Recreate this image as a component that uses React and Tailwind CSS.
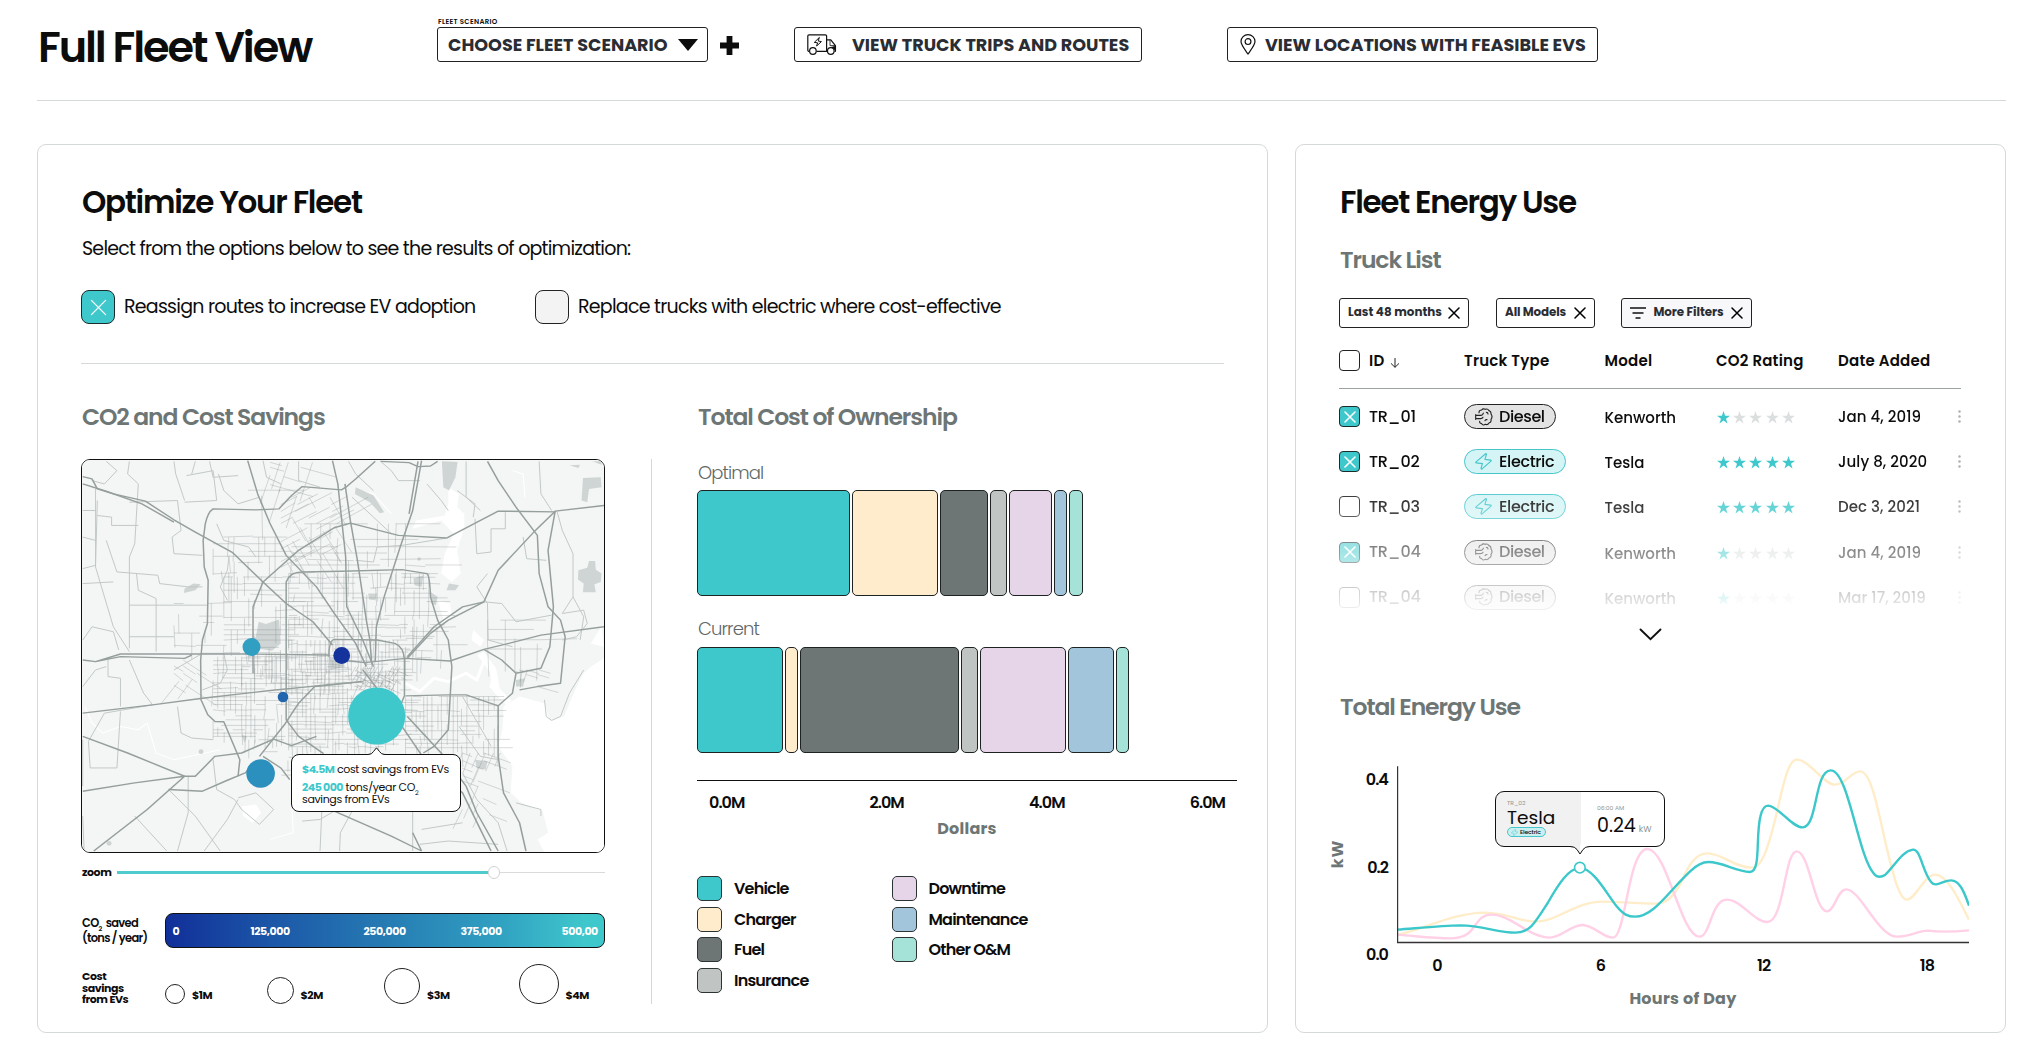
import React from 'react';

function seeded(seed) {
  let s = seed;
  return () => {
    s = (s * 16807) % 2147483647;
    return s / 2147483647;
  };
}

/* Street grid: broken horizontal and vertical segments inside a box. */
function streets(seed, x0, y0, x1, y1, step, keep, skew = 0) {
  const rnd = seeded(seed);
  let d = '';
  for (let y = y0; y < y1; y += step * (0.7 + rnd() * 0.6)) {
    for (let x = x0; x < x1; ) {
      const len = step * (1.5 + rnd() * 4);
      if (rnd() < keep) d += `M${x.toFixed(0)} ${y.toFixed(0)}l${len.toFixed(0)} ${(skew * len + (rnd() < 0.25 ? rnd() * 10 - 5 : 0)).toFixed(0)}`;
      x += len;
    }
  }
  for (let x = x0; x < x1; x += step * (0.7 + rnd() * 0.6)) {
    for (let y = y0; y < y1; ) {
      const len = step * (1.5 + rnd() * 4);
      if (rnd() < keep) d += `M${x.toFixed(0)} ${y.toFixed(0)}l${(-skew * len + (rnd() < 0.25 ? rnd() * 10 - 5 : 0)).toFixed(0)} ${len.toFixed(0)}`;
      y += len;
    }
  }
  return d;
}

const GRID = [
  streets(11, 430, 410, 600, 640, 17, 0.62),
  streets(23, 612, 400, 1010, 600, 14, 0.62),
  streets(37, 400, 650, 600, 900, 14, 0.62),
  streets(41, 612, 600, 930, 930, 12, 0.66),
  streets(53, 940, 770, 1200, 930, 14, 0.62),
  streets(67, 940, 560, 1060, 660, 18, 0.45),
  streets(71, 290, 490, 400, 640, 18, 0.4),
  streets(83, 400, 290, 600, 410, 19, 0.5),
  streets(97, 590, 170, 760, 390, 20, 0.55, -0.55),
  streets(101, 480, 640, 760, 740, 12, 0.5),
  streets(113, 800, 680, 930, 750, 9, 0.6, 0.5),
  streets(127, 1170, 540, 1330, 640, 24, 0.5),
  streets(131, 1100, 940, 1210, 1130, 18, 0.45, 0.4),
  streets(137, 560, 65, 720, 170, 22, 0.4, 0.3),
  streets(139, 1240, 690, 1320, 745, 12, 0.5, 0.3),
  streets(149, 290, 660, 370, 750, 17, 0.45, 0.7),
  streets(151, 620, 250, 1000, 400, 24, 0.4),
  streets(157, 500, 900, 620, 1010, 18, 0.35),
  streets(163, 380, 70, 560, 200, 36, 0.35),
];

const RURAL = [
  'M70 145V380L120 560L165 635', 'M165 62L160 100L190 130L180 310L165 350L165 625', 'M34 210H70M34 290L70 300', 'M34 385L70 375L75 180',
  'M100 62L130 90L95 130L60 120', 'M75 225L115 230L115 255L190 255', 'M165 185L300 180L310 270L285 290L290 340L370 345', 'M290 62L295 100L320 180',
  'M325 105L400 90L410 180L320 185', 'M340 100L350 62M390 62L400 110L470 105', 'M100 300L130 395L245 405L250 430L330 440L370 440', 'M165 495H385M240 475V635M165 590H290',
  'M185 400L190 450L240 475', 'M34 430L120 425', 'M165 660L205 760L230 795', 'M105 660V710L140 715L140 800', 'M50 905L95 820L230 795', 'M140 815L130 985L55 985L50 905',
  'M300 800L310 880L340 895L400 900', 'M290 690L370 640L430 640L440 690L420 730L370 750', 'M180 1130L270 1235M275 1050L350 1130L420 1235', 'M330 1010L330 1120L300 1235', 'M375 1235L440 1140L470 1080',
  'M34 600L60 560L120 575L135 630', 'M34 740L70 690L100 680', 'M34 1130L38 1235', 'M34 1040L34 900', 'M1110 62L1110 170L1150 210', 'M1135 235L1140 340L1180 335L1180 265L1220 265L1220 215',
  'M1315 62L1320 160L1350 210M1365 212L1380 270L1410 340L1410 470L1380 520', 'M1270 290L1280 355L1335 360M1170 490L1140 440L1170 400', 'M1160 485L1210 490L1250 545L1350 525M1170 490L1172 600L1240 620',
  'M1380 520L1440 510L1450 550L1420 590L1380 600', 'M700 1235L705 1115M755 1235L757 1180L790 1115M960 1235L960 1115L980 1060', 'M980 1215L1060 1205L1200 1215M985 1170L1100 1150', 'M650 1145L700 1140L740 1115',
  'M400 960L410 1050L460 1080L480 1110L530 1155L570 1110L520 1060L470 1075', 'M870 62L900 90L920 120L980 120M1000 130L1040 180L1060 210', 'M780 62L800 100L850 150M790 170L850 230L900 280',
  'M860 320L850 365L800 360M860 320L930 315L1055 293', 'M1085 150L1135 190L1130 230', 'M415 100L430 150L470 190L530 170', 'M410 250L430 300L500 320L520 350', 'M440 480L420 440L440 390L445 345',
  'M1090 860L1150 950L1200 960M1100 1000L1140 1080L1200 1150L1225 1235', 'M1330 780L1335 830L1350 842L1375 830L1400 760L1440 690', 'M1250 1090L1320 1110L1320 1130', 'M540 60L550 110L590 130M640 62L640 120L700 140', 'M1180 920L1100 770M1410 470L1440 530L1430 600',
];

const MAJOR = [
  'M34 108L60 115L75 145L120 160L210 182L290 238L350 275L455 337L540 425L605 490L680 545L735 615',
  'M34 130L100 152L200 190L290 245',
  'M855 62L800 115L775 138L760 148L650 138L620 165L585 205L520 208L400 205Q385 215 378 250L372 300L375 380L386 420L384 550L370 600L365 660L366 780L385 825L405 845L430 846L475 960L470 1010',
  'M605 495V425Q615 395 650 395L760 393L930 388L1000 400Q1008 405 1010 470L1030 540L1060 600L1070 680L1060 870L1020 920L990 940M605 490V840L640 890L710 942',
  'M34 660L70 665L140 642L330 642L480 642L725 645M70 665L140 650L320 655L340 645M760 660L825 668L940 655L1065 663L1160 628L1230 610L1320 585L1497 560',
  'M735 60L750 130L762 250L772 350L775 500L820 600L850 680', 'M770 130L785 240L805 360L830 540L840 600L845 670',
  'M497 60L525 160L560 250L605 345L690 440L740 520L800 610L830 680', 'M985 60L960 210L925 320L880 470L858 560L855 665M975 62L950 220',
  'M1170 62L1200 120L1250 200L1310 285L1315 400L1340 500L1375 540L1388 590L1375 730L1310 740L1260 750', 'M1497 195L1360 212L1300 275L1200 390L1160 485L1060 540L1010 580L945 655',
  'M1160 485L1100 500L1020 560L945 650', 'M1360 212L1340 330L1355 500L1345 620L1320 685L1250 700L1240 760L1200 798L1110 765L1060 765L940 768', 'M1160 628L1210 660L1250 700',
  'M34 820L230 795L370 775L560 752L720 735L815 725', 'M34 890L160 940L320 1010L350 1010L405 950L480 940L570 898L620 918L690 890',
  'M530 950L600 855L640 790L685 740L820 725M520 965L490 1000L440 1022L370 1055L275 1050', 'M34 1055L180 1030L320 1010L215 1110L65 1235', 'M820 690L870 760L930 860L1000 970L1100 1060L1150 1170L1180 1235',
  'M945 830L1040 940L1110 1040L1140 1120L1200 1235', 'M740 1115L900 1190L985 1235M960 1180L985 1235', 'M725 650Q725 600 740 598L860 600L910 610Q935 620 937 660L937 768L905 850',
  'M1200 798V950L1215 1060L1260 1150L1278 1235', 'M1055 293L920 285L785 248L740 262L640 330L540 425L512 500L512 700', 'M1055 293L1200 212L1360 214', 'M540 950L590 985L615 1020', 'M870 62L950 66L975 78L1010 76L1030 62',
];

function CityMap() {
  return (
    <svg className="block h-full w-full" viewBox="32 58 1465 1180" preserveAspectRatio="none">
      <rect x="32" y="58" width="1465" height="1180" fill="#f4f5f5" />
      <g fill="#ffffff">
        <path d="M1497 655L1460 680L1440 700L1420 740L1385 830L1345 842L1330 790L1260 770L1215 800L1212 870L1200 920L1240 980L1235 1060L1265 1090L1325 1115L1340 1180L1310 1200L1330 1238H1497Z" />
        <path d="M1060 140L1090 160L1085 200L1105 220L1105 260L1085 330L1095 400L1070 425L1040 400L1050 340L1075 280L1040 240L960 265L970 240L1050 225L1060 190Z" />
        <path d="M1030 480L1065 490L1070 530L1050 550ZM1130 570L1160 600L1150 620L1125 600ZM480 1100L520 1095L535 1120L510 1150L485 1130ZM1490 560L1497 620L1460 610Z" />
      </g>
      <g fill="none" stroke="#ffffff" strokeLinejoin="round">
        <path strokeWidth="9" d="M940 730L980 755L1020 715L1060 725L1110 700L1140 720L1165 650L1190 690L1180 740L1215 770" />
        <path strokeWidth="20" d="M1150 640L1185 690L1195 750L1230 790" />
        <path strokeWidth="3" d="M40 800L60 850L90 880L140 860L190 870L215 850L240 940L290 960L420 930M620 1080L625 1180L560 1200M1240 90L1270 100L1275 170M900 220L850 160L800 150" />
      </g>
      <g fill="#cfd5d4">
        <path d="M528 545L548 552L585 538L590 610L565 632L520 625L500 610L520 590Z" />
        <path d="M1425 390L1450 382L1455 362L1472 362L1474 388L1490 400L1488 425L1470 432L1474 456L1438 456L1440 430L1424 418Z" />
        <path d="M1042 62L1086 64L1080 110L1062 150L1046 140Z" />
        <path d="M1438 112L1488 110L1490 140L1455 145L1450 185L1434 180ZM1464 62H1490V72ZM1400 74L1430 72L1425 82Z" />
        <path d="M962 415L990 405L985 440L965 435ZM1062 430L1090 435L1080 450L1055 450ZM1010 455L1030 470L1025 495L1012 490Z" />
        <path d="M320 445L345 430L365 432L350 450L318 458ZM725 650L760 655L770 680L730 690ZM835 460L860 460L855 480L838 478ZM480 885L495 890L488 910ZM1135 960L1170 965L1165 990L1140 985ZM1250 720L1275 715L1270 740L1250 740ZM800 140L850 165L880 215L868 218L840 185L798 160Z" />
        <circle cx="108" cy="1212" r="7" /><circle cx="366" cy="936" r="7" /><circle cx="978" cy="356" r="5" />
      </g>
      <g fill="none" stroke="#75817f" strokeOpacity="0.4" strokeWidth="2" strokeLinejoin="round">
        {GRID.map((d, i) => <path key={i} d={d} />)}
      </g>
      <g fill="none" stroke="#c0c7c5" strokeWidth="2.8" strokeLinejoin="round">
        {RURAL.map((d, i) => <path key={i} d={d} />)}
      </g>
      <g fill="none" stroke="#959f9d" strokeWidth="4.2" strokeLinejoin="round">
        {MAJOR.map((d, i) => <path key={i} d={d} />)}
      </g>
    </svg>
  );
}

const Cross = ({ className, w = 2 }) => (
  <svg className={className} viewBox="0 0 12 12" fill="none" stroke="currentColor" strokeWidth={w} strokeLinecap="round">
    <path d="M1 1L11 11M11 1L1 11" />
  </svg>
);

const TruckIcon = () => (
  <svg className="h-[21px] w-[30px]" viewBox="0 0 30 21" fill="none" stroke="#111" strokeWidth="1.2" strokeLinejoin="round">
    <path d="M2.2 17.3H1.8Q.8 17.3 .8 16V2Q.8 .8 2 .8H18.4Q19.6 .8 19.6 2V17.3H9.5M19.6 5.8H23.8L28.4 11.6V17.3H27.6M19.6 17.3H20" />
    <path d="M23 6.2V11.6H28.4" strokeWidth=".8" />
    <path d="M24 13.4L28.6 12V16.6L27 15Z" fill="#111" strokeWidth=".6" />
    <path d="M12.4 3.4L7.3 8.4L10.6 8.8L9.6 12L14.4 7.6L11.2 7Z" strokeWidth="1" />
    <circle cx="5.9" cy="17" r="3.3" fill="#fff" /><circle cx="23.8" cy="17" r="3.3" fill="#fff" />
  </svg>
);

const PinIcon = () => (
  <svg className="h-[21px] w-[16px]" viewBox="0 0 16 21" fill="none" stroke="#111" strokeWidth="1.2">
    <path d="M8 20C4.6 15.2 1 11 1 7.6A7 7 0 0 1 15 7.6C15 11 11.4 15.2 8 20Z" />
    <circle cx="8" cy="7.6" r="2.9" />
  </svg>
);

const ExhaustIcon = () => (
  <svg className="h-[18px] w-[18px] shrink-0" viewBox="0 0 54 54" fill="none" stroke="#222" strokeWidth="3.4" strokeLinecap="round" strokeLinejoin="round">
    <path d="M2 20V34M2 22H17Q24 22 25 15M2 32H17Q22 32 24 28" />
    <path d="M12 14Q12 6 20 6Q24 0 31 4Q38 1 42 8Q49 10 48 18Q54 26 48 34Q50 43 42 45Q38 52 31 49Q24 54 20 47Q13 46 14 40" />
    <path d="M34 13Q39 13 39 18M30 38Q31 34 36 35" />
  </svg>
);

const BoltIcon = ({ className }) => (
  <svg className={className} viewBox="0 0 48 48" fill="none" stroke="#45c6ca" strokeWidth="3.2" strokeLinejoin="round">
    <path d="M30 2Q33 1 32 5L28 18L44 20Q47 21 45 23L20 45Q17 47 17 43L21 30L4 28Q1 27 3 25Z" />
  </svg>
);

const Check = ({ on }) =>
  on ? (
    <span className="flex h-[21px] w-[21px] items-center justify-center rounded-[4px] border border-[#1c2b2c] bg-[#3ec8cb] text-white">
      <Cross className="h-[12px] w-[12px]" w={1.6} />
    </span>
  ) : (
    <span className="h-[21px] w-[21px] rounded-[4px] border border-[#222] bg-white" />
  );

const TypePill = ({ type }) =>
  type === 'Diesel' ? (
    <span className="flex h-[25px] w-[92px] items-center gap-[6px] rounded-full border border-[#222] bg-[#e3e3e3] pl-[10px] tracking-[-0.025em]">
      <ExhaustIcon />Diesel
    </span>
  ) : (
    <span className="flex h-[25px] w-[102px] items-center gap-[7px] rounded-full border border-[#45c6ca] bg-[#d5f4f5] pl-[10px] tracking-[-0.022em]">
      <BoltIcon className="h-[17px] w-[17px] shrink-0" />Electric
    </span>
  );

const Stars = ({ n }) => (
  <span className="flex gap-[3.2px] pl-px pt-[2px]">
    {[0, 1, 2, 3, 4].map((i) => (
      <svg key={i} className={i < n ? 'h-[13px] w-[13px] text-[#3ec8cb]' : 'h-[13px] w-[13px] text-[#dcdfdf]'} viewBox="0 0 24 24" fill="currentColor">
        <path d="M12 0L14.9 8.7H24L16.6 14.1L19.4 23L12 17.6L4.6 23L7.4 14.1L0 8.7H9.1Z" />
      </svg>
    ))}
  </span>
);

const ROWS = [
  { on: true, id: 'TR_01', type: 'Diesel', model: 'Kenworth', stars: 1, date: 'Jan 4, 2019' },
  { on: true, id: 'TR_02', type: 'Electric', model: 'Tesla', stars: 5, date: 'July 8, 2020' },
  { on: false, id: 'TR_03', type: 'Electric', model: 'Tesla', stars: 5, date: 'Dec 3, 2021' },
  { on: true, id: 'TR_04', type: 'Diesel', model: 'Kenworth', stars: 1, date: 'Jan 4, 2019' },
  { on: false, id: 'TR_04', type: 'Diesel', model: 'Kenworth', stars: 1, date: 'Mar 17, 2019' },
];

const COLORS = ['bg-[#3ec8cb]', 'bg-[#ffeccd]', 'bg-[#6d7675]', 'bg-[#c0c5c4]', 'bg-[#e6d5e8]', 'bg-[#a3c5dc]', 'bg-[#a5e2d8]'];
const OPTIMAL = [153.5, 86, 48, 17, 42.5, 13, 14];
const CURRENT = [86.5, 13, 158.5, 17, 86, 46, 13.5];

const CostBar = ({ parts }) => (
  <div className="-ml-[0.5px] flex h-[106px] gap-[2px]">
    {parts.map((w, i) => (
      <div key={i} className={`${COLORS[i]} rounded-[5px] border border-[#1d2323]`} style={{ width: w }} />
    ))}
  </div>
);

const LegendItem = ({ i, children }) => (
  <div className="flex h-[25px] items-center gap-[12px]">
    <span className={`${COLORS[i]} h-[25px] w-[25px] rounded-[5px] border border-[#2c3333]`} />
    <span className="pt-px text-[16px] font-semibold leading-[20px] tracking-[-0.05em]">{children}</span>
  </div>
);

const Chip = ({ className, children }) => (
  <span className={`${className} flex h-[30px] items-center justify-between rounded-[3px] border border-[#222] pl-[8px] pr-[8px] text-[11.9px] font-bold leading-none text-[#2a2d33]`}>
    {children}
    <Cross className="h-[12px] w-[12px] text-black" w={1.5} />
  </span>
);

const SizeKey = ({ circle, label }) => (
  <div className="flex items-end gap-[7px]">
    <span className={`${circle} rounded-full border border-[#222]`} />
    <span className="h-[17px] leading-[16px]">{label}</span>
  </div>
);

const H2 = ({ children }) => <h2 className="h-[40px] pl-px text-[31px] font-semibold leading-[40px] tracking-[-0.041em]">{children}</h2>;
const H3 = ({ children }) => <h3 className="h-[34px] pl-px text-[23.5px] font-semibold leading-[34px] tracking-[-0.046em] text-[#6d7675]">{children}</h3>;

function Header() {
  return (
    <header className="mx-[37px] flex h-[101px] w-[1969px] items-start border-b border-[#d5d8d8]">
      <h1 className="mt-[17px] w-[400px] pl-px text-[43px] font-semibold leading-[60px] tracking-[-0.05em]">Full Fleet View</h1>
      <div className="mt-[17px] w-[357px]">
        <div className="h-[10px] pl-px text-[7px] font-semibold leading-[10px] tracking-[0.04em]">FLEET SCENARIO</div>
        <div className="flex items-center">
          <div className="flex h-[35px] w-[271px] items-center justify-between rounded-[3px] border border-[#222] pl-[10px] pr-[9px] text-[17.6px] font-bold text-[#2a2d33]">
            <span className="pt-[3px] leading-none">CHOOSE FLEET SCENARIO</span>
            <svg className="h-[12px] w-[20px]" viewBox="0 0 20 12"><path d="M0 0H20L10 12Z" fill="#0c0c0c" /></svg>
          </div>
          <svg className="ml-[12px] mt-[2px] h-[19px] w-[19px]" viewBox="0 0 19 19"><path d="M6.6 0H12.4V6.6H19V12.4H12.4V19H6.6V12.4H0V6.6H6.6Z" fill="#0c0c0c" /></svg>
        </div>
      </div>
      <div className="mt-[27px] flex h-[35px] w-[348px] items-center rounded-[3px] border border-[#222] pl-[12px] text-[17.6px] font-bold text-[#2a2d33]">
        <TruckIcon />
        <span className="ml-[15px] whitespace-nowrap pt-[3px] leading-none">VIEW TRUCK TRIPS AND ROUTES</span>
      </div>
      <div className="ml-[85px] mt-[27px] flex h-[35px] w-[371px] items-center rounded-[3px] border border-[#222] pl-[12px] text-[17.6px] font-bold text-[#2a2d33]">
        <PinIcon />
        <span className="ml-[9px] whitespace-nowrap pt-[3px] leading-none">VIEW LOCATIONS WITH FEASIBLE EVS</span>
      </div>
    </header>
  );
}

function SavingsColumn() {
  return (
    <section className="w-[524px]">
      <H3>CO2 and Cost Savings</H3>
      <div className="relative mt-[25px] h-[394px] w-[524px] overflow-hidden rounded-[9px] border-[1.5px] border-[#111]">
        <CityMap />
        <svg className="absolute left-0 top-0 h-full w-full" viewBox="0 0 522 392">
          <circle cx="169.5" cy="187" r="9" fill="#319fc2" />
          <circle cx="259.7" cy="195.5" r="8.4" fill="#14339c" />
          <circle cx="201" cy="237" r="5.3" fill="#2165ae" />
          <circle cx="294.7" cy="256" r="28.6" fill="#3fc8cc" />
          <circle cx="178.6" cy="313.5" r="14.3" fill="#2b90bd" />
        </svg>
        <div className="absolute left-[209px] top-[294px] h-[58px] w-[170px] rounded-[8px] border border-[#111] bg-white pl-[10px] pt-[8px] text-[11px] leading-[12px] tracking-[-0.032em]">
          <svg className="absolute left-[76px] top-[-8px] h-[9px] w-[17px]" viewBox="0 0 17 9"><path d="M0 7.5Q4 7.5 5.5 4.5L8.5 .8L11.5 4.5Q13 7.5 17 7.5V9H0Z" fill="#fff" /><path d="M0 7.5Q4 7.5 5.5 4.5L8.5 .8L11.5 4.5Q13 7.5 17 7.5" fill="none" stroke="#111" /></svg>
          <p className="whitespace-nowrap"><b className="font-bold tracking-[-0.05em] text-[#3ec8cb]">$4.5M</b> cost savings from EVs</p>
          <p className="mt-[6px] whitespace-nowrap"><b className="font-bold tracking-[-0.05em] text-[#3ec8cb]">245 000</b> tons/year CO<span className="relative top-[4px] text-[6.5px] leading-none">2</span></p>
          <p className="whitespace-nowrap">savings from EVs</p>
        </div>
      </div>
      <div className="mt-[9px] flex h-[20px] items-center text-[11px] font-bold leading-none tracking-[-0.04em]">
        <span className="w-[36px] pl-px">zoom</span>
        <span className="h-[3px] w-[371px] bg-[#4fcbce]" />
        <span className="h-[13px] w-[12px] rounded-full border border-[#d0d3d3] bg-white" />
        <span className="h-px flex-1 bg-[#d9dbdb]" />
      </div>
      <div className="mt-[31px] flex h-[35px] items-center text-[11.5px] font-semibold">
        <div className="w-[84px] whitespace-nowrap pl-px pt-px leading-[15px] tracking-[-0.06em]">
          CO<span className="relative top-[4px] text-[6.5px] leading-none">2</span>&nbsp; saved<br />(tons / year)
        </div>
        <div className="flex h-[35px] w-[440px] items-center rounded-[8px] border-[1.5px] border-[#111] bg-[linear-gradient(90deg,#112f99,#1c58a8_25%,#267bb3_50%,#309fc1_75%,#3fc8cc_96%)] pl-[6.5px] pt-px text-[11px] font-bold leading-none tracking-[-0.04em] text-white">
          <span className="w-[78px]">0</span><span className="w-[113px]">125,000</span><span className="w-[97px]">250,000</span><span className="w-[101px]">375,000</span><span>500,00</span>
        </div>
      </div>
      <div className="mt-[10px] grid h-[46px] grid-cols-[84px_101.5px_117.5px_134.5px_auto] items-end text-[11px] font-bold tracking-[-0.04em]">
        <div className="-mb-[2px] pl-px leading-[11.7px]">Cost<br />savings<br />from EVs</div>
        <SizeKey circle="h-[20px] w-[20px]" label="$1M" />
        <SizeKey circle="h-[27px] w-[27px]" label="$2M" />
        <SizeKey circle="h-[36px] w-[36px]" label="$3M" />
        <SizeKey circle="h-[40px] w-[40px]" label="$4M" />
      </div>
    </section>
  );
}

function OwnershipColumn() {
  return (
    <section className="w-[540px]">
      <H3>Total Cost of Ownership</H3>
      <p className="mt-[27px] h-[24px] pl-px text-[18px] font-light leading-[24px] tracking-[-0.05em] text-[#5f6867]">Optimal</p>
      <div className="mt-[5px]"><CostBar parts={OPTIMAL} /></div>
      <p className="mt-[21px] h-[24px] pl-px text-[18px] font-light leading-[24px] tracking-[-0.05em] text-[#5f6867]">Current</p>
      <div className="mt-[6px]"><CostBar parts={CURRENT} /></div>
      <div className="mt-[27px] h-px bg-[#111]" />
      <div className="mt-[12px] flex h-[20px] justify-between px-[12px] text-[16px] font-semibold leading-[20px] tracking-[-0.06em]">
        <span>0.0M</span><span>2.0M</span><span>4.0M</span><span>6.0M</span>
      </div>
      <p className="mt-[6px] h-[20px] text-center text-[16px] font-bold leading-[20px] tracking-[0.015em] text-[#6d7675]">Dollars</p>
      <div className="mt-[37px] flex">
        <div className="flex w-[194.5px] flex-col gap-[5.7px]">
          <LegendItem i={0}>Vehicle</LegendItem>
          <LegendItem i={1}>Charger</LegendItem>
          <LegendItem i={2}>Fuel</LegendItem>
          <LegendItem i={3}>Insurance</LegendItem>
        </div>
        <div className="flex flex-col gap-[5.7px]">
          <LegendItem i={4}>Downtime</LegendItem>
          <LegendItem i={5}>Maintenance</LegendItem>
          <LegendItem i={6}>Other O&amp;M</LegendItem>
        </div>
      </div>
    </section>
  );
}

function OptimizePanel() {
  return (
    <main className="h-[889px] w-[1231px] rounded-[9px] border border-[#d6d9d9] pl-[43px] pt-[37px]">
      <H2>Optimize Your Fleet</H2>
      <p className="mt-[12px] h-[29px] pl-px text-[19px] leading-[30px] tracking-[-0.041em]">Select from the options below to see the results of optimization:</p>
      <div className="mt-[27px] flex h-[34px] items-center text-[19px] tracking-[-0.04em]">
        <span className="flex h-[34px] w-[34px] items-center justify-center rounded-[8px] border border-[#1c2b2c] bg-[#3ec8cb] text-white"><Cross className="h-[19px] w-[17px]" w={0.9} /></span>
        <span className="ml-[9px] w-[411px] pt-px">Reassign routes to increase EV adoption</span>
        <span className="h-[34px] w-[34px] rounded-[8px] border border-[#222] bg-[#f3f3f3]" />
        <span className="ml-[9px] pt-px">Replace trucks with electric where cost-effective</span>
      </div>
      <div className="mt-[39px] h-px w-[1143px] bg-[#d5d8d8]" />
      <div className="mt-[36px] flex">
        <SavingsColumn />
        <div className="ml-[46px] mr-[45px] mt-[59px] h-[545px] w-px bg-[#d5d8d8]" />
        <OwnershipColumn />
      </div>
    </main>
  );
}

function EnergyChart() {
  return (
    <div className="flex pt-[29px]">
      <div className="-ml-[4px] mr-[4px] flex w-[5px] justify-center pt-[89px]">
        <span className="h-[24px] w-[30px] shrink-0 -rotate-90 text-center text-[16px] font-bold leading-[24px] tracking-[0.05em] text-[#6d7675]">kW</span>
      </div>
      <div className="flex h-[212px] w-[44px] flex-col justify-between pt-[17px] text-right text-[16px] font-semibold leading-[20px] tracking-[-0.06em]">
        <span>0.4</span><span>0.2</span><span>0.0</span>
      </div>
      <div className="relative ml-[9px] w-[572px]">
        <svg className="block h-[191px] w-[572px]" viewBox="212 250 1245 573" preserveAspectRatio="none" fill="none" strokeWidth="2.4">
          <path vectorEffect="non-scaling-stroke" stroke="#ffedc9" d="M212 795C270 780 330 730 405 729C450 730 480 756 515 756C560 756 600 696 660 696C710 697 740 702 770 702C800 702 810 685 830 640C845 590 860 551 888 551C920 551 945 594 985 594C1005 594 1020 540 1040 420C1055 330 1065 270 1082 270C1110 270 1140 345 1165 345C1190 345 1200 305 1220 305C1250 305 1265 480 1290 600C1300 655 1310 690 1322 690C1340 690 1360 615 1383 615C1410 615 1435 690 1457 750" />
          <path vectorEffect="non-scaling-stroke" stroke="#ffd0e6" d="M212 795C260 800 290 806 330 806C390 806 375 735 418 735C460 735 500 804 545 804C570 804 590 766 615 766C640 766 660 804 682 804C710 804 715 538 757 538C800 538 830 801 870 801C895 801 895 690 930 690C960 690 990 757 1018 757C1055 757 1055 545 1082 545C1110 545 1120 725 1148 725C1165 725 1170 659 1190 659C1220 659 1260 801 1300 801C1330 801 1345 783 1368 783C1390 787 1420 787 1457 782" />
          <path vectorEffect="non-scaling-stroke" stroke="#3cc8cb" d="M212 780C260 775 310 768 350 767C400 768 430 789 470 789C500 789 510 765 540 700C565 640 585 598 610 594C640 598 665 665 690 710C705 735 715 741 730 741C770 741 800 670 850 605C865 585 880 577 890 577C920 577 950 605 980 607C1005 607 992 500 1003 440C1007 415 1012 408 1020 408C1045 412 1070 473 1095 473C1128 473 1120 302 1156 302C1195 302 1215 560 1250 612C1256 622 1265 624 1275 615C1295 590 1310 545 1335 540C1352 538 1355 605 1375 638C1385 655 1400 632 1418 632C1435 632 1445 660 1457 708" />
          <ellipse vectorEffect="non-scaling-stroke" cx="610" cy="594" rx="11.5" ry="16" fill="#fff" stroke="#3cc8cb" strokeWidth="1.6" />
          <path vectorEffect="non-scaling-stroke" stroke="#333" strokeWidth="1.5" d="M213 290V818.5H1457" />
        </svg>
        <div className="absolute left-[98px] top-[38px] flex h-[56px] w-[170px] rounded-[9px] border border-[#111] bg-[linear-gradient(90deg,#f1f1f1_50.5%,#fff_50.5%)] leading-none">
          <div className="w-[85px] pl-[11px] pt-[8px]">
            <div className="h-[7px] text-[6px] leading-[7px] text-[#8d9694]">TR_02</div>
            <div className="h-[20px] text-[18.5px] leading-[21px]">Tesla</div>
            <div className="flex h-[10px] w-[39px] items-center gap-[2px] rounded-full border border-[#45c6ca] bg-[#c9eff0] pl-[3px] text-[6px] font-medium leading-none tracking-[-0.02em]">
              <BoltIcon className="h-[7px] w-[7px] shrink-0" />Electric
            </div>
          </div>
          <div className="pl-[16px] pt-[12px]">
            <div className="h-[8px] text-[6px] leading-[8px] text-[#8d9694]">06:00 AM</div>
            <div className="mt-[3px] flex h-[22px] items-center gap-[3px] text-[19px] leading-[22px]">0.24<span className="pt-[7px] text-[8.5px] leading-none text-[#8d9694]">kW</span></div>
          </div>
          <svg className="absolute left-[74px] top-[53px] h-[10px] w-[20px]" viewBox="0 0 20 10">
            <path d="M0 1.5Q5 1.5 7 4.5L10 9L10.5 0H0Z" fill="#f1f1f1" />
            <path d="M20 1.5Q15 1.5 13 4.5L10 9V0H20Z" fill="#fff" />
            <path d="M0 1.5Q5 1.5 7 4.5L10 9L13 4.5Q15 1.5 20 1.5" fill="none" stroke="#111" />
          </svg>
        </div>
        <div className="mt-[12px] flex gap-[123.3px] pl-[20px] text-center text-[16px] font-semibold leading-[20px] tracking-[-0.06em]">
          <span className="w-[40px]">0</span><span className="w-[40px]">6</span><span className="w-[40px]">12</span><span className="w-[40px]">18</span>
        </div>
        <p className="mt-[13px] text-center text-[16px] font-bold leading-[20px] tracking-[0.018em] text-[#6d7675]">Hours of Day</p>
      </div>
    </div>
  );
}

function EnergyPanel() {
  return (
    <aside className="h-[889px] w-[711px] rounded-[9px] border border-[#d6d9d9] pl-[43px] pt-[37px]">
      <H2>Fleet Energy Use</H2>
      <div className="mt-[21px]"><H3>Truck List</H3></div>
      <div className="mt-[21px] flex">
        <Chip className="w-[130px] tracking-[0.002em]">Last 48 months</Chip>
        <Chip className="ml-[27px] w-[98.5px] tracking-[-0.01em]">All Models</Chip>
        <Chip className="ml-[26.5px] w-[131px] bg-[#f8f7fa] tracking-[-0.005em]">
          <svg className="h-[12px] w-[16px]" viewBox="0 0 16 12" stroke="#111" strokeWidth="1.4"><path d="M0 1H16M2.5 6H13.5M5.5 11H10.5" /></svg>
          More Filters
        </Chip>
      </div>
      <div className="w-[622px]">
        <div className="mt-[20px] grid h-[25px] grid-cols-[30px_95px_140.5px_111.5px_122px_1fr] items-center text-[15px] font-semibold tracking-[0.015em]">
          <Check />
          <span className="flex items-center gap-[6px] pt-px">ID<svg className="mt-[3px] h-[10px] w-[10px]" viewBox="0 0 10 10" fill="none" stroke="#222"><path d="M5 0V9.3M1 5.4L5 9.3L9 5.4" /></svg></span>
          <span className="pt-px">Truck Type</span><span className="pt-px">Model</span><span className="pt-px">CO2 Rating</span><span className="pt-px">Date Added</span>
        </div>
        <div className="mt-[15px] h-px bg-[#9aa3a1]" />
        <div className="mt-[5px] h-[226px] [mask-image:linear-gradient(to_bottom,black_37%,transparent_100%)]">
          {ROWS.map((r, i) => (
            <div key={i} className="grid h-[45.2px] grid-cols-[30px_95px_140.5px_111.5px_122px_119px_1fr] items-center whitespace-nowrap text-[16px] font-medium leading-none">
              <Check on={r.on} />
              <span className="tracking-[-0.01em]">{r.id}</span>
              <TypePill type={r.type} />
              <span className="pt-[2px] text-[15px]">{r.model}</span>
              <Stars n={r.stars} />
              <span className="text-[15px] tracking-[0.005em]">{r.date}</span>
              <svg className="ml-px h-[13px] w-[3px]" viewBox="0 0 3 13" fill="#a9b0af"><circle cx="1.5" cy="1.5" r="1.2" /><circle cx="1.5" cy="6.5" r="1.2" /><circle cx="1.5" cy="11.5" r="1.2" /></svg>
            </div>
          ))}
        </div>
        <svg className="mx-auto mt-[8px] block h-[13px] w-[23px]" viewBox="0 0 23 13" fill="none" stroke="#111" strokeWidth="1.9" strokeLinecap="round"><path d="M1.5 1.5L11.5 11.2L21.5 1.5" /></svg>
      </div>
      <div className="mt-[49px]"><H3>Total Energy Use</H3></div>
      <EnergyChart />
    </aside>
  );
}

export default function App() {
  return (
    <div className="h-[1064px] w-[2040px] overflow-hidden bg-white font-['Poppins','Inter',sans-serif] text-[#0c0c0c]">
      <Header />
      <div className="ml-[37px] mt-[43px] flex gap-[27px]">
        <OptimizePanel />
        <EnergyPanel />
      </div>
    </div>
  );
}
